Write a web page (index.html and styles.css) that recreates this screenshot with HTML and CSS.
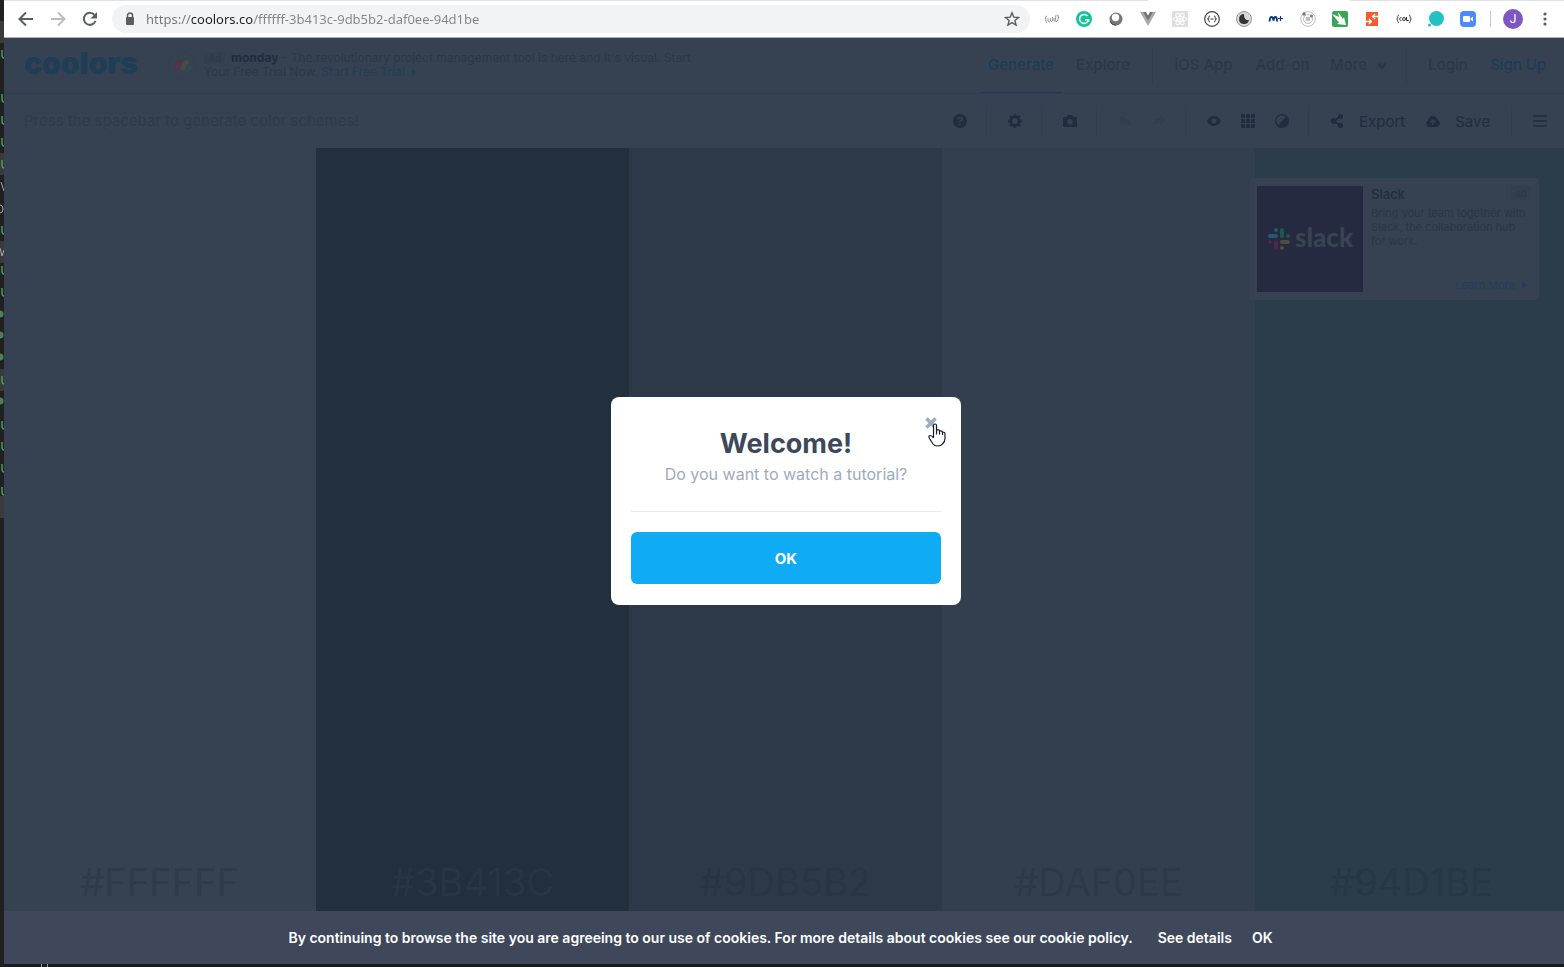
FILE: index.html
```html
<!DOCTYPE html>
<html lang="en">
<head>
<meta charset="utf-8">
<title>Coolors</title>
<link rel="stylesheet" href="styles.css">
</head>
<body>
<div class="desktop">
  <svg class="editor-edge" width="4" height="967" aria-hidden="true">
    <defs>
      <path id="u" d="M2 -4V1Q2 4 4 4" fill="none" stroke="#4a9b68" stroke-width="1.5"/>
      <circle id="d" r="3.5" fill="#4f7f5c"/>
    </defs>
    <path fill="#3a3a3a" d="M0 21h4v22H0zM0 153h4v22H0zM0 241h4v22H0zM0 369h4v22H0zM0 496h4v22H0z"/>
    <use href="#u" y="54"/><use href="#u" y="98"/><use href="#u" y="120"/><use href="#u" y="142"/><use href="#u" y="164"/><use href="#u" y="230"/><use href="#u" y="270"/><use href="#u" y="292"/><use href="#u" y="380"/><use href="#u" y="425"/><use href="#u" y="446"/><use href="#u" y="468"/><use href="#u" y="491"/>
    <use href="#d" y="314"/><use href="#d" y="335"/><use href="#d" y="357"/><use href="#d" y="401"/>
    <path d="M1 182l3 9M0 205q3 0 3 4t-3 4M0 248l2 8 2-6" fill="none" stroke="#aaa"/>
  </svg>
  <div class="window">
    <header class="chrome">
      <div class="tab-line" aria-hidden="true"><i></i><i></i></div>
      <button class="cbtn" aria-label="Back"><svg width="16" height="16" viewBox="0 0 16 16"><path d="M15 8H2M8 1.5L1.5 8 8 14.5" fill="none" stroke="#5a5d61" stroke-width="2"/></svg></button>
      <button class="cbtn" aria-label="Forward"><svg width="16" height="16" viewBox="0 0 16 16"><path d="M1 8h13M8 1.5L14.500 8 8 14.5" fill="none" stroke="#babcbe" stroke-width="2"/></svg></button>
      <button class="cbtn" aria-label="Reload"><svg width="16" height="16" viewBox="0 0 16 16"><path d="M13.500 10A6 6 0 1 1 12.500 4" fill="none" stroke="#5a5d61" stroke-width="2"/><path d="M15 1v6.500H8.500z" fill="#5a5d61"/></svg></button>
      <div class="omnibox">
        <svg width="10" height="14" viewBox="0 0 10 14"><path d="M2.500 6V3.500a2.500 2.500 0 0 1 5 0V6" fill="none" stroke="#5a5d61" stroke-width="1.500"/><rect x="1" y="5" width="8" height="8" rx="1" fill="#5a5d61"/></svg>
        <input class="url" type="text" aria-label="Address" value="https://coolors.co/ffffff-3b413c-9db5b2-daf0ee-94d1be">
        <button class="star" aria-label="Bookmark"><svg width="16" height="16" viewBox="0 0 16 16"><path d="M8 1.800l1.800 4.300 4.700.4-3.600 3 1.100 4.600L8 11.600l-4 2.500 1.100-4.600-3.600-3 4.700-.4z" fill="none" stroke="#5a5d61" stroke-width="1.400"/></svg></button>
      </div>
      <div class="extensions">
        <svg viewBox="0 0 16 16"><path d="M3 5Q1 5 1.500 8T3 12M13 4q2 0 1.500 3T12 11M4 7v3q1 2 2.500 0V7m0 3q1 1 2 0V6m1.500 1v3M12 4l-1 7" fill="none" stroke="#999"/></svg>
        <svg viewBox="0 0 16 16"><circle cx="8" cy="8" r="8" fill="#15c39a"/><path d="M11.500 5A4.500 4.500 0 1 0 12.500 8.700H9M12.500 8.700V11" fill="none" stroke="#fff" stroke-width="1.500"/></svg>
        <svg viewBox="0 0 16 16"><circle cx="8" cy="8" r="6.500" fill="#777"/><circle cx="7.500" cy="6.500" r="3.700" fill="#fff"/><path d="M2 10q1 4 6 4.500" fill="none" stroke="#444"/></svg>
        <svg viewBox="0 0 16 16"><path d="M0 1h4l4 7 4-7h4L8 15z" fill="#aaa"/><path d="M3 1h3l2 3.500L10 1h3L8 9.500z" fill="#737373"/></svg>
        <svg viewBox="0 0 16 16"><path fill="#dedede" d="M0 0h16v16H0z"/><g fill="none" stroke="#fff"><ellipse cx="8" cy="8" rx="6.500" ry="2.500"/><ellipse cx="8" cy="8" rx="6.500" ry="2.500" transform="rotate(60 8 8)"/><ellipse cx="8" cy="8" rx="6.500" ry="2.500" transform="rotate(120 8 8)"/></g><circle cx="8" cy="8" r="1.500" fill="#fff"/></svg>
        <svg viewBox="0 0 16 16"><circle cx="8" cy="8" r="7.300" fill="#fff" stroke="#444" stroke-width="1.200"/><path d="M6 5Q4.500 5 4.800 6.500T3.500 8q1.300 0 1.300 1.500T6 11M10 5q1.500 0 1.200 1.500T12.500 8q-1.300 0-1.300 1.500T10 11M6.500 8h3" fill="none" stroke="#333"/></svg>
        <svg viewBox="0 0 16 16"><circle cx="8" cy="8" r="7.500" fill="#d8d8d8" stroke="#999"/><path d="M8 3a5 5 0 1 0 5 6Q8 10 8 3z" fill="#333"/></svg>
        <svg viewBox="0 0 16 16"><path d="M1.500 10.500Q2 6 3.500 6T5.500 9.500Q6 6 7.500 6T9 10.500" fill="none" stroke="#0b3a75" stroke-width="1.900"/><path d="M12.500 5v5M10 7.500h5" stroke="#0b3a75" stroke-width="1.200"/></svg>
        <svg viewBox="0 0 16 16"><g fill="none" stroke="#bbb"><circle cx="8" cy="8" r="7.300"/><circle cx="8" cy="8" r="4.500"/></g><circle cx="8" cy="8" r="2.300" fill="#bbb"/><circle cx="4" cy="3" r="1.700" fill="#777"/><circle cx="11.500" cy="5" r="1.500" fill="#777"/></svg>
        <svg viewBox="0 0 16 16"><rect width="16" height="16" rx="2" fill="#3aa655"/><path d="M0 3l7 3-1-5 5 7 1-2 2 8-9-1 2-1.500z" fill="#fff"/></svg>
        <svg viewBox="0 0 16 16"><rect x="2" y="1" width="12" height="14" fill="#f9592b"/><path d="M14 5.500H9M11 3L8.500 5.500 11 8M2 10.500h5M5 8l2.500 2.500L5 13" fill="none" stroke="#fff" stroke-width="1.300"/></svg>
        <svg viewBox="0 0 16 16"><path d="M3 4Q1.500 4 1.800 6T.5 8q1.300 0 1.300 2T3 12M13 4q1.500 0 1.200 2T15.500 8q-1.300 0-1.300 2T13 12M5.500 6.500q-2 0-2 1.500t2 1.500" fill="none" stroke="#555"/><circle cx="8" cy="8" r="1.500" fill="none" stroke="#333"/><path d="M10.500 6v3.500h2.200" fill="none" stroke="#333"/></svg>
        <svg viewBox="0 0 16 16"><circle cx="8.500" cy="7.500" r="7.500" fill="#22c1c3"/><circle cx="1.500" cy="14" r="1.500" fill="#22c1c3"/></svg>
        <svg viewBox="0 0 16 16"><rect width="16" height="16" rx="4" fill="#4a8cff"/><rect x="3" y="5" width="7" height="6" rx="1" fill="#fff"/><path d="M10.500 7.500L13 5.500v5l-2.500-2z" fill="#fff"/></svg>
      </div>
      <span class="chrome-sep"></span>
      <button class="avatar">J</button>
      <button class="kebab" aria-label="Menu"><svg width="4" height="14"><circle cx="2" cy="2" r="1.600"/><circle cx="2" cy="7" r="1.600"/><circle cx="2" cy="12" r="1.600"/></svg></button>
    </header>

    <div class="page">
      <div class="topbar">
        <a class="logo" href="#">coolors</a>
        <svg class="monday" width="28" height="28" viewBox="0 0 28 28"><circle cx="14" cy="14" r="13.500" fill="none" stroke="#354050"/><path d="M8 17l3.500-6" stroke="#553247" stroke-width="4.500" stroke-linecap="round"/><path d="M15 17l3.500-6" stroke="#4c4b3f" stroke-width="4.500" stroke-linecap="round"/><circle cx="22" cy="17" r="2.300" fill="#20544e"/></svg>
        <p class="promo"><span class="tag">Ad</span><b>monday</b> - The revolutionary project management tool is here and it's visual. Start Your Free Trial Now. <a href="#">Start Free Trial <svg class="arrow" width="5" height="7" viewBox="0 0 5 7"><path d="M0 0l5 3.500L0 7z"/></svg></a></p>
        <nav class="nav">
          <a class="on" href="#">Generate</a><a href="#">Explore</a><i></i>
          <a href="#">iOS App</a><a href="#">Add-on</a><a href="#">More <svg width="10" height="8" viewBox="0 0 10 8"><path d="M1.500 2L5 5.500 8.500 2" fill="none" stroke="#293647" stroke-width="2.600"/></svg></a><i></i>
          <a href="#">Login</a><a class="accent" href="#">Sign Up</a>
        </nav>
      </div>
      <div class="toolbar">
        <p class="hint">Press the spacebar to generate color schemes!</p>
        <div class="group one"><button aria-label="Help"><svg viewBox="0 0 16 16"><circle cx="8" cy="8" r="7" fill="#202d3f"/><path d="M5.800 6.500Q6 4.500 8 4.500t2.200 1.700Q10.200 7.300 8 8.300V9.500M8 10.800v1.700" fill="none" stroke="#364151" stroke-width="1.600"/></svg></button></div>
        <div class="group one"><button aria-label="Settings"><svg viewBox="0 0 16 16"><circle cx="8" cy="8" r="4.200" fill="none" stroke="#202d3f" stroke-width="2.600"/><path d="M8 1v2.500M8 12.500V15M1 8h2.500M12.500 8H15M3 3l2 2M11 11l2 2M13 3l-2 2M5 11l-2 2" stroke="#202d3f" stroke-width="2.400"/></svg></button></div>
        <div class="group one"><button aria-label="Camera"><svg viewBox="0 0 16 16"><path d="M1 4h3.500L6 2h4l1.500 2H15v10H1z" fill="#202d3f"/><circle cx="8" cy="8.700" r="2.700" fill="#364151"/></svg></button></div>
        <div class="group undo"><button aria-label="Undo"><svg viewBox="0 0 16 16"><path d="M1 7l6-5v3q6 0 7 8-2-4-7-3.500V12z" fill="#323e4f"/></svg></button><button aria-label="Redo"><svg viewBox="0 0 16 16"><path d="M15 7L9 2v3q-6 0-7 8 2-4 7-3.500V12z" fill="#323e4f"/></svg></button></div>
        <div class="group view"><button aria-label="View"><svg viewBox="0 0 16 16"><path d="M1 8q2.500-5 7-5t7 5q-2.500 5-7 5T1 8z" fill="#202d3f"/><circle cx="8" cy="8" r="2.500" fill="#364151"/></svg></button><button aria-label="Grid"><svg viewBox="0 0 16 16"><path fill="#202d3f" d="M1 1h4v4H1zM6 1h4v4H6zM11 1h4v4h-4zM1 6h4v4H1zM6 6h4v4H6zM11 6h4v4h-4zM1 11h4v4H1zM6 11h4v4H6zM11 11h4v4h-4z"/></svg></button><button aria-label="Contrast"><svg viewBox="0 0 16 16"><circle cx="8" cy="8" r="7" fill="#202d3f"/><path d="M4 12A5.500 5.500 0 0 1 12 4z" fill="#364151"/></svg></button></div>
        <div class="group actions"><button><svg viewBox="0 0 16 16"><path d="M12 3.500L4 8l8 4.500" fill="none" stroke="#202d3f" stroke-width="2"/><circle cx="11.500" cy="3.500" r="2.500" fill="#202d3f"/><circle cx="4.500" cy="8" r="2.900" fill="#202d3f"/><circle cx="11.500" cy="12.500" r="2.500" fill="#202d3f"/></svg><span>Export</span></button><button><svg viewBox="0 0 16 16"><path d="M4 14a3.500 3.500 0 0 1-1-6.500Q4 3 8 3t5 4.500A3.500 3.500 0 0 1 12 14z" fill="#202d3f"/><path d="M8 12V8M5.500 9.500L8 7l2.500 2.500" fill="none" stroke="#364151" stroke-width="1.500"/></svg><span>Save</span></button></div>
        <div class="group menu"><button aria-label="Open menu"><svg viewBox="0 0 16 16"><path d="M1 3h14M1 8h14M1 13h14" stroke="#202d3f" stroke-width="1.600"/></svg></button></div>
      </div>
      <main class="palette">
        <section class="color c1">#FFFFFF</section>
        <section class="color c2">#3B413C</section>
        <section class="color c3">#9DB5B2</section>
        <section class="color c4">#DAF0EE</section>
        <section class="color c5">#94D1BE</section>
        <aside class="slack">
          <div class="slack-art"><svg width="24" height="24" viewBox="0 0 24 24" fill="none" stroke-width="4" stroke-linecap="round"><path d="M3 9h6M9 3h0" stroke="#245773"/><path d="M15 3v6M21 9h0" stroke="#22544f"/><path d="M15 15h6M15 21h0" stroke="#514a40"/><path d="M9 15v6M3 15h0" stroke="#4b2948"/></svg><span>slack</span></div>
          <div class="slack-body">
            <div class="slack-head"><strong>Slack</strong><span class="tag">ad</span></div>
            <p>Bring your team together with Slack, the collaboration hub for work.</p>
            <a href="#">Learn More <svg class="arrow" width="5" height="7" viewBox="0 0 5 7"><path d="M0 0l5 3.500L0 7z"/></svg></a>
          </div>
        </aside>
      </main>
      <footer class="cookies"><p>By continuing to browse the site you are agreeing to our use of cookies. For more details about cookies see our cookie policy.</p><a href="#">See details</a><button>OK</button></footer>

      <div class="overlay">
        <div class="modal" role="dialog" aria-labelledby="welcome">
          <button class="close" aria-label="Close"><svg width="12" height="12" viewBox="0 0 12 12"><path d="M1.500 1.500l9 9M10.500 1.500l-9 9" stroke="#9dacbf" stroke-width="3.600"/></svg></button>
          <svg class="pointer" width="18" height="24" viewBox="0 0 18 24"><path d="M5.500 15V2.500Q5.500 1 7 1t1.500 1.500V7q2.800-.7 3 1 2.600-.5 3 1 2.500-.2 2.500 2v4.500q0 3-2.500 5.500-1.500 2-5 2-3 0-4.500-2L1.500 15.500Q0 13 2 12.500q1.500-.2 3.500 2.500M8.500 7v4.500M11.500 8v3.500M14.500 9v3" fill="#fff" stroke="#16182c" stroke-width="1.200"/></svg>
          <h1 id="welcome">Welcome!</h1>
          <p>Do you want to watch a tutorial?</p>
          <hr>
          <button class="ok">OK</button>
        </div>
      </div>
    </div>
  </div>
</div>
</body>
</html>
```
FILE: styles.css
```css
* { box-sizing: border-box; }
body { margin: 0; background: #1b1b1b; font-family: Inter, "Open Sans", sans-serif; }
button { border: 0; padding: 0; background: none; font: inherit; color: inherit; }
a { color: inherit; text-decoration: none; }
p { margin: 0; }
svg { flex: none; }

.desktop { display: flex; height: 100vh; overflow: hidden; background: linear-gradient(90deg, #999 1px, transparent 1px 6px, #999 6px) 41px 100% / 7px 4px no-repeat #1b1b1b; }
.editor-edge { background: #202020; }
.window { flex: 1; min-width: 0; display: flex; flex-direction: column; margin-bottom: 3px; }

.chrome { position: relative; display: flex; align-items: center; height: 38px; padding: 0 17px 0 6px; background: #fff; border-bottom: 1px solid #adb0b6; }
.tab-line { position: absolute; top: 0; left: 0; right: 0; display: flex; justify-content: space-between; }
.tab-line i { width: 1144px; height: 1px; background: #dee1e6; }
.tab-line i + i { width: 214px; }
.cbtn { display: grid; place-items: center; width: 32px; height: 32px; }
.omnibox { flex: 1; display: flex; align-items: center; height: 28px; margin-left: 6px; padding: 0 10px 0 13px; border-radius: 14px; background: #f1f3f4; }
.url { flex: 1; min-width: 0; margin-left: 11px; padding: 0; border: 0; font: 13px "Noto Sans", "Open Sans", sans-serif; color: transparent; background: linear-gradient(90deg, #73777c 45px, #202124 45px, #202124 107px, #80868b 107px); -webkit-background-clip: text; background-clip: text; }
.star { display: flex; }
.extensions { display: flex; gap: 16px; margin-left: 14px; }
.extensions svg { width: 16px; height: 16px; }
.chrome-sep { width: 1px; height: 16px; margin: 0 12px 0 14px; background: #c4c7cb; }
.avatar { width: 20px; height: 20px; border-radius: 50%; background: #7e57c2; color: #fff; font: 12px Roboto, sans-serif; }
.kebab { display: flex; margin-left: 20px; fill: #5a5d61; }

.page { position: relative; flex: 1; min-height: 0; display: flex; flex-direction: column; margin-right: -4px; background: #364151; color: #2b3848; }
.topbar { display: flex; height: 56px; padding: 0 21px 0 20px; border-bottom: 1px solid #323d4d; }
.logo { width: 144px; font-size: 30px; line-height: 50px; font-weight: 900; color: #1e3d57; }
.monday { margin-top: 13px; }
.promo { width: 514px; margin: 13px 0 0 8px; font-size: 12px; line-height: 14px; color: #2b3849; }
.promo b { color: #202d3f; }
.promo a { color: #1e405d; }
.tag { display: inline-block; padding: 0 4px; margin-right: 6px; border-radius: 2px; background: #333e4e; color: #2c394a; font-size: 10px; line-height: 12px; }
.arrow { margin-left: 4px; fill: #1e405d; }
.nav { display: grid; grid-template-columns: 82px 90px 1px 101px 57px 95px 1px 82px 58px; margin-left: auto; font-size: 15px; font-weight: 500; line-height: 54px; text-align: center; white-space: nowrap; }
.nav a:nth-child(2) { padding-right: 8px; }
.nav a svg { margin-left: 6px; }
.nav i { height: 39px; margin-top: 8px; background: #323d4d; }
.nav .on { color: #1d3c58; border-bottom: 1px solid #1d3c58; }
.nav .accent { color: #1d3c58; }
.toolbar { display: flex; align-items: center; height: 54px; padding-left: 20px; }
.hint { flex: 1; padding-bottom: 2px; font-size: 15px; color: #2e3b4b; }
.group { display: flex; align-items: center; height: 32px; padding-left: 20px; gap: 18px; border-left: 1px solid #323d4d; }
.group:nth-child(2) { border-left-color: transparent; }
.group svg { width: 16px; height: 16px; }
.group button { display: flex; align-items: center; }
.one { width: 55px; }
.undo { width: 89px; }
.view { width: 123px; }
.actions { width: 203px; gap: 20px; font-size: 15px; color: #202d3f; }
.actions span { margin-left: 14px; }
.menu { width: 57px; }

.palette { position: relative; flex: 1; display: grid; grid-template-columns: repeat(5, 1fr); margin-left: -1px; }
.color { display: flex; align-items: flex-end; justify-content: center; padding-bottom: 8px; font-size: 38px; line-height: 42px; color: #2f3b4b; }
.c2 { background: #222f3c; color: #283543; }
.c3 { background: #2d3949; color: #293544; }
.c4 { background: #333f4f; color: #2d3949; }
.c5 { background: #2b3c4a; color: #273745; }

.slack { position: absolute; top: 30px; right: 29px; display: flex; gap: 8px; width: 290px; padding: 8px; border-radius: 4px; background: #364151; }
.slack-art { display: flex; align-items: center; justify-content: center; gap: 4px; width: 106px; height: 106px; background: #252a40; color: #384354; font: 900 26px Lato, sans-serif; }
.slack-art span { padding-bottom: 4px; }
.slack-body { flex: 1; display: flex; flex-direction: column; font-size: 11px; line-height: 14px; color: #293747; }
.slack-head { display: flex; justify-content: space-between; margin-bottom: 3px; font-size: 13px; line-height: 17px; }
.slack-head strong { font-weight: 500; color: #202d3f; }
.slack-head .tag { margin: 0; height: 14px; line-height: 14px; }
.slack-body a { margin-top: auto; padding-right: 4px; text-align: right; color: #20405b; }

.cookies { display: flex; align-items: center; justify-content: center; height: 53px; padding-right: 11px; background: #3e485a; color: #fff; font-size: 14px; font-weight: 600; white-space: nowrap; }
.cookies a { margin: 0 20px 0 25px; }

.overlay { position: absolute; inset: 0; display: grid; place-items: center; }
.modal { position: relative; width: 350px; padding: 32px 20px 21px; border-radius: 8px; background: #fff; text-align: center; }
.modal h1 { margin: 0; font-size: 27px; line-height: 30px; color: #3d485b; }
.modal p { margin-top: 4px; font-size: 16px; line-height: 22px; color: #9dabbd; }
.modal hr { height: 1px; margin: 26px 0 20px; border: 0; background: #e8eaec; }
.ok { width: 100%; height: 52px; border-radius: 6px; background: #10abf5; color: #fff; font-size: 15px; font-weight: 700; }
.close { position: absolute; top: 20px; right: 24px; display: flex; }
.pointer { position: absolute; top: 26px; right: 15px; }
```
